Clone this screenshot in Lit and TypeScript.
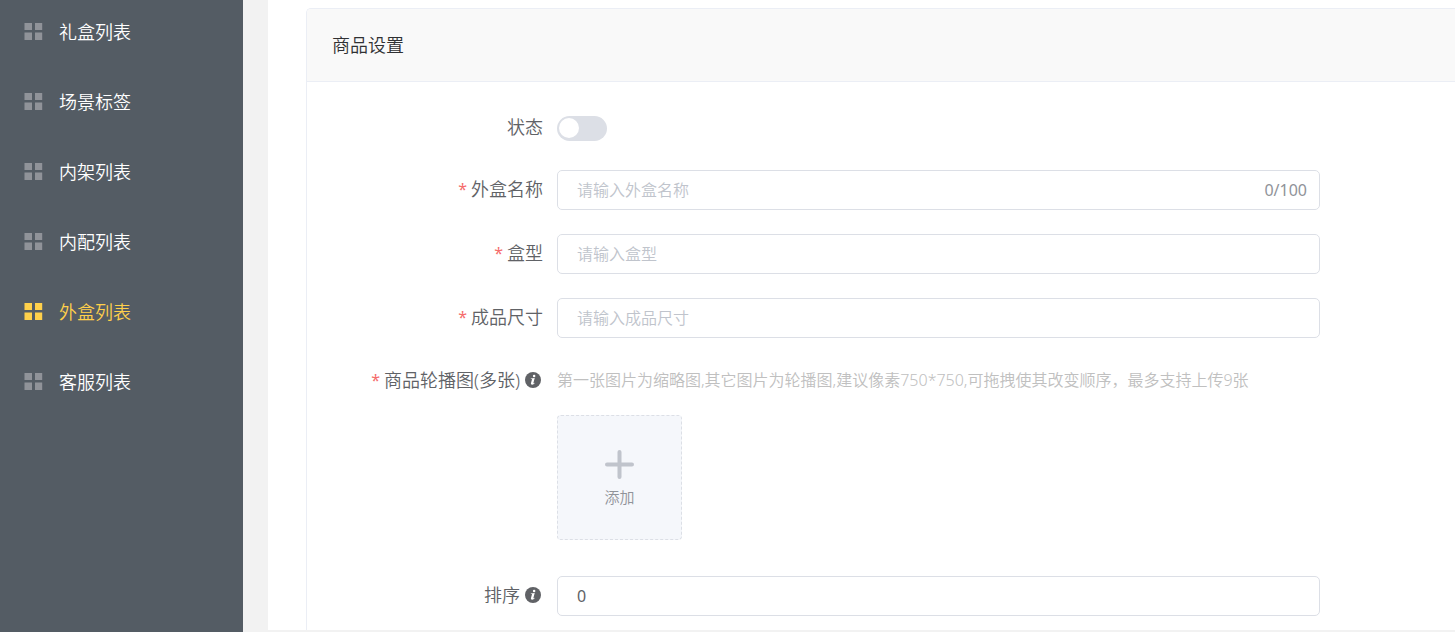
import { LitElement, html, css, svg, nothing } from "lit";
import { customElement, state } from "lit/decorators.js";
import { classMap } from "lit/directives/class-map.js";

const MENU = ["礼盒列表", "场景标签", "内架列表", "内配列表", "外盒列表", "客服列表"];

const NAME_LIMIT = 100;

const gridIcon = html`<svg class="menu-icon" viewBox="0 0 20 20" aria-hidden="true">
  ${svg`<path fill="currentColor" d="M1.5 1H9v7H1.5zM12 1h7.2v7H12zM1.5 10.5H9V18H1.5zM12 10.5h7.2V18H12z"/>`}
</svg>`;

const infoIcon = html`<svg class="info-icon" viewBox="0 0 16 16" aria-hidden="true">
  <circle cx="8" cy="8" r="8" fill="currentColor"></circle>
  <circle cx="9.1" cy="4" r="1.25" fill="#fff"></circle>
  <path
    fill="#fff"
    d="M5.8 6.5 9.7 6 8.4 10.9c-.15.6.25.6.9-.1l.4.3c-.7 1.1-1.5 1.7-2.5 1.7-1 0-1.5-.7-1.2-1.7l.95-3.5c.1-.4 0-.5-1.15-.5z"
  ></path>
</svg>`;

const plusIcon = html`<svg class="plus-icon" viewBox="0 0 30 30" aria-hidden="true">
  <path d="M14.5 3v25M2 15.5h25" stroke="currentColor" stroke-width="4" stroke-linecap="round"></path>
</svg>`;

@customElement("app-root")
export class AppRoot extends LitElement {
  @state() private active = 4;
  @state() private boxName = "";

  static styles = css`
    :host {
      display: flex;
      min-height: 100vh;
      background: #f2f2f2;
      color: #606266;
      font-family: "Noto Sans", "Noto Sans CJK SC", sans-serif;
      font-size: 18px;
      font-weight: 350;
      line-height: 24px;
    }
    * {
      box-sizing: border-box;
    }
    .sidebar {
      flex: 0 0 243px;
      display: flex;
      flex-direction: column;
      gap: 6px;
      background: #545c64;
    }
    .menu-item {
      display: flex;
      align-items: center;
      gap: 16px;
      height: 64px;
      padding: 0 23px;
      color: #fff;
      text-decoration: none;
    }
    .menu-icon {
      width: 20px;
      height: 20px;
      color: #909399;
    }
    .menu-item.active,
    .menu-item.active .menu-icon {
      color: #ffd04b;
    }
    .content {
      flex: 1;
      min-width: 0;
      display: flex;
      padding: 0 0 2px 25px;
    }
    .page {
      flex: 1;
      min-width: 0;
      display: flex;
      padding: 8px 0 0 38px;
      background: #fff;
    }
    .card {
      flex: 1;
      min-width: 0;
      border: 1px solid #ebeef5;
      border-right: 0;
      border-bottom: 0;
      border-radius: 5px 0 0 0;
      overflow: hidden;
    }
    .card-header {
      margin: 0;
      padding: 24px 25px;
      border-bottom: 1px solid #ebeef5;
      background: #f9f9f9;
      color: #303133;
      font-size: 18px;
      font-weight: inherit;
      line-height: 24px;
    }
    .form {
      display: grid;
      gap: 24px;
      padding: 28px 135px 14px 0;
    }
    .row {
      display: grid;
      grid-template-columns: 236px minmax(0, 1fr);
      column-gap: 14px;
      align-items: center;
    }
    .row.media {
      align-items: start;
      padding-bottom: 12px;
    }
    .label {
      display: flex;
      align-items: center;
      justify-content: flex-end;
      padding-bottom: 2px;
      line-height: 34px;
      white-space: nowrap;
    }
    .media .label {
      padding-bottom: 0;
      line-height: 36px;
    }
    .required::before {
      content: "*";
      margin-right: 4px;
      color: #f56c6c;
      font-size: 16px;
      font-weight: 400;
    }
    .info-icon {
      width: 16px;
      height: 16px;
      margin: 0 2px 0 5px;
    }
    .switch {
      appearance: none;
      display: flex;
      align-items: center;
      width: 50px;
      height: 25px;
      margin: 0;
      padding: 0 2px;
      border-radius: 13px;
      background: #dcdfe6;
      cursor: pointer;
    }
    .switch::before {
      content: "";
      width: 20px;
      height: 20px;
      border-radius: 50%;
      background: #fff;
    }
    .switch:checked {
      justify-content: flex-end;
      background: #409eff;
    }
    .field {
      display: flex;
      align-items: center;
      height: 40px;
      padding-right: 12px;
      border: 1px solid #dcdfe6;
      border-radius: 5px;
      background: #fff;
    }
    .field:focus-within {
      border-color: #409eff;
    }
    .input {
      flex: 1;
      min-width: 0;
      height: 100%;
      padding: 0 19px;
      border: 0;
      outline: 0;
      background: none;
      color: #606266;
      font: inherit;
      font-size: 16px;
      font-weight: 400;
    }
    .input::placeholder {
      color: #c0c4cc;
      font-weight: 350;
      opacity: 1;
    }
    .count {
      color: #909399;
      font-size: 16px;
      font-weight: 400;
    }
    .hint {
      margin: 0 0 17px;
      color: #c0c0c0;
      font-size: 16px;
      line-height: 36px;
      white-space: nowrap;
    }
    .upload {
      display: flex;
      flex-direction: column;
      align-items: center;
      justify-content: center;
      gap: 6px;
      width: 125px;
      height: 125px;
      padding: 3px 0 0;
      border: 1px dashed #dcdfe6;
      border-radius: 4px;
      background: #f5f7fb;
      color: #909399;
      font: inherit;
      font-size: 15px;
      line-height: 24px;
      cursor: pointer;
    }
    .plus-icon {
      width: 30px;
      height: 30px;
      color: #c0c4cc;
    }
  `;

  private select(event: Event, index: number) {
    event.preventDefault();
    this.active = index;
  }

  private textRow(id: string, label: string, extra: unknown = nothing) {
    return html`<div class="row">
      <label class="label required" for=${id}>${label}</label>
      <div class="field">
        <input
          class="input"
          id=${id}
          type="text"
          placeholder=${"请输入" + label}
          maxlength=${NAME_LIMIT}
          @input=${(e: Event) => {
            if (id === "name") this.boxName = (e.target as HTMLInputElement).value;
          }}
        />
        ${extra}
      </div>
    </div>`;
  }

  render() {
    return html`
      <nav class="sidebar">
        ${MENU.map(
          (text, i) => html`<a
            class=${classMap({ "menu-item": true, active: i === this.active })}
            href="#"
            @click=${(e: Event) => this.select(e, i)}
            >${gridIcon}<span>${text}</span></a
          >`
        )}
      </nav>
      <main class="content">
        <div class="page">
          <section class="card">
            <h2 class="card-header">商品设置</h2>
            <form class="form" @submit=${(e: Event) => e.preventDefault()}>
              <div class="row">
                <label class="label" for="status">状态</label>
                <input class="switch" id="status" type="checkbox" role="switch" />
              </div>
              ${this.textRow(
                "name",
                "外盒名称",
                html`<span class="count">${this.boxName.length}/${NAME_LIMIT}</span>`
              )}
              ${this.textRow("shape", "盒型")} ${this.textRow("size", "成品尺寸")}
              <div class="row media">
                <label class="label required" for="images">商品轮播图(多张)${infoIcon}</label>
                <div>
                  <p class="hint">第一张图片为缩略图,其它图片为轮播图,建议像素750*750,可拖拽使其改变顺序，最多支持上传9张</p>
                  <button class="upload" id="images" type="button">${plusIcon}<span>添加</span></button>
                </div>
              </div>
              <div class="row">
                <label class="label" for="sort">排序${infoIcon}</label>
                <div class="field">
                  <input class="input" id="sort" type="text" inputmode="numeric" value="0" />
                </div>
              </div>
            </form>
          </section>
        </div>
      </main>
    `;
  }
}
